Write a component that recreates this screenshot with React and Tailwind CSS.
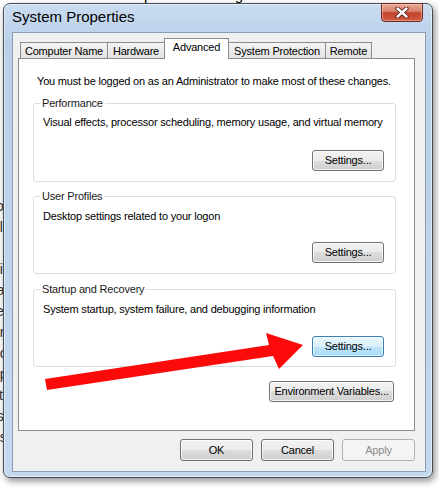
import React from 'react'

const btnBase = "flex items-center justify-center rounded-[3px] border text-[11px] leading-none"
const btnNormal = "border-[#707070] bg-[linear-gradient(to_bottom,#f2f2f2_0%,#ebebeb_50%,#dddddd_50%,#cfcfcf_100%)] shadow-[inset_0_0_0_1px_rgba(255,255,255,0.75)] text-black"
const btnHot = "border-[#3c7fb1] bg-[linear-gradient(to_bottom,#eaf6fd_0%,#d9f0fc_50%,#bee6fd_50%,#a7d9f5_100%)] shadow-[inset_0_0_0_1px_rgba(255,255,255,0.6)] text-black"
const btnDisabled = "border-[#adb2b5] bg-[#f4f4f4] text-[#8a8a8a]"

function Button({ children, className = '', hot, disabled }) {
  const look = disabled ? btnDisabled : hot ? btnHot : btnNormal
  return (
    <button type="button" className={`${btnBase} ${look} ${className}`}>
      {children}
    </button>
  )
}

function GroupBox({ title, text, box, gap, hot }) {
  return (
    <fieldset className={`${box} border border-[#d5dfe5] rounded-[3px] pl-[9px] pr-[11px]`}>
      <legend className="ml-[-3px] px-[2px] leading-[14px] text-[#1a1a1a]">{title}</legend>
      <p className="leading-[14px] whitespace-nowrap">{text}</p>
      <div className={`flex justify-end ${gap}`}>
        <Button hot={hot} className="w-[72px] h-[21px]">Settings...</Button>
      </div>
    </fieldset>
  )
}

const tabs = [
  { label: 'Computer Name', w: 'w-[88px]' },
  { label: 'Hardware', w: 'w-[58px]' },
  { label: 'Advanced', w: 'w-[65px]', active: true },
  { label: 'System Protection', w: 'w-[98px]' },
  { label: 'Remote', w: 'w-[47px]' },
]

function CloseButton() {
  return (
    <div className="absolute right-[9px] top-[-1px] w-[42px] h-[19px] rounded-b-[4px] border border-[#6b2a1f] bg-[linear-gradient(to_bottom,#e9a896_0%,#d98470_42%,#c4432c_52%,#d15a40_100%)] shadow-[inset_0_0_0_1px_rgba(255,220,210,0.45)] flex items-center justify-center">
      <svg width="14" height="11" viewBox="0 0 14 11">
        <path d="M2.5 1.5 L11.5 9.5 M11.5 1.5 L2.5 9.5" stroke="#4a1a12" strokeWidth="4.2" strokeLinecap="round" />
        <path d="M2.5 1.5 L11.5 9.5 M11.5 1.5 L2.5 9.5" stroke="#ffffff" strokeWidth="2.4" strokeLinecap="round" />
      </svg>
    </div>
  )
}

export default function App() {
  return (
    <div className="relative w-[439px] h-[487px] overflow-hidden bg-white font-['Liberation_Sans',Arial,sans-serif] text-black">
      {/* page behind the dialog */}
      <div className="absolute top-[-14px] left-[2px] text-[15px] leading-[17px] whitespace-nowrap">
        © 2009 Microsoft Corporation. All rights reserved.
      </div>
      <div className="absolute top-[196px] left-[-8px] text-[14px] leading-[21px] text-[#333]">
        <p>to</p>
        <p>ol</p>
        <p>it</p>
        <p>ni</p>
        <p>ra</p>
        <p>te</p>
        <p>on</p>
        <p>ec</p>
        <p>op</p>
        <p>ct</p>
        <p>rs</p>
        <p>es</p>
      </div>

      {/* dialog window */}
      <div className="absolute left-[3px] top-[3px] w-[430px] h-[475px] rounded-[7px] border border-[#434c57] bg-[linear-gradient(to_bottom,#cadcf0_0%,#b9d0ea_8%,#bdd4ec_60%,#c4d9ef_100%)] shadow-[2px_3px_7px_rgba(0,0,0,0.45),inset_0_0_0_1px_rgba(255,255,255,0.55)] flex flex-col">
        <div className="relative h-[28px] shrink-0">
          <div className="pl-[8px] pt-[4px] text-[15px] leading-[17px] text-black">System Properties</div>
          <CloseButton />
        </div>

        <div className="ml-[8px] mr-[6px] mb-[5px] flex-1 border border-[#8d9db1] bg-[#f0f0f0] pt-[5px] pl-[5px] pr-[10px] flex flex-col text-[11px] tracking-[-0.2px]">
          {/* tabs */}
          <div className="flex items-end h-[20px] ml-[2px]">
            {tabs.map((t, i) =>
              t.active ? (
                <div
                  key={t.label}
                  className={`${t.w} relative z-10 -ml-px -mb-px h-[21px] bg-white border border-b-0 border-[#898c95] flex justify-center pt-[1px] leading-[14px]`}
                >
                  {t.label}
                </div>
              ) : (
                <div
                  key={t.label}
                  className={`${t.w} ${i === 0 ? '' : '-ml-px'} h-[16px] border border-b-0 border-[#898c95] bg-[linear-gradient(to_bottom,#f4f4f4,#e2e2e2)] flex items-center justify-center leading-[14px]`}
                >
                  {t.label}
                </div>
              )
            )}
          </div>

          {/* tab page */}
          <div className="h-[373px] bg-white border border-[#898c95] pt-[15px] pl-[14px] pr-[18px] flex flex-col">
            <p className="pl-[4px] leading-[14px] whitespace-nowrap">
              You must be logged on as an Administrator to make most of these changes.
            </p>
            <GroupBox
              title="Performance"
              text="Visual effects, processor scheduling, memory usage, and virtual memory"
              box="mt-[8px] pt-[5px] pb-[10px]"
              gap="mt-[21px]"
            />
            <GroupBox
              title="User Profiles"
              text="Desktop settings related to your logon"
              box="mt-[7px] pt-[6px] pb-[10px]"
              gap="mt-[19px]"
            />
            <GroupBox
              title="Startup and Recovery"
              text="System startup, system failure, and debugging information"
              box="mt-[8px] pt-[6px] pb-[9px]"
              gap="mt-[20px]"
              hot
            />
            <div className="flex justify-end mt-[14px] mr-[2px]">
              <Button className="w-[125px] h-[21px]">Environment Variables...</Button>
            </div>
          </div>

          {/* dialog buttons */}
          <div className="flex justify-end gap-[8px] mt-[8px]">
            <Button className="w-[73px] h-[22px]">OK</Button>
            <Button className="w-[73px] h-[22px]">Cancel</Button>
            <Button disabled className="w-[73px] h-[22px]">Apply</Button>
          </div>
        </div>
      </div>

      {/* red annotation arrow */}
      <svg className="absolute inset-0 pointer-events-none" width="439" height="487" viewBox="0 0 439 487">
        <polygon
          points="45,379 269,345 266,333 303,345 279,369 273,356 47,390"
          fill="#fb0a0a"
        />
      </svg>
    </div>
  )
}
